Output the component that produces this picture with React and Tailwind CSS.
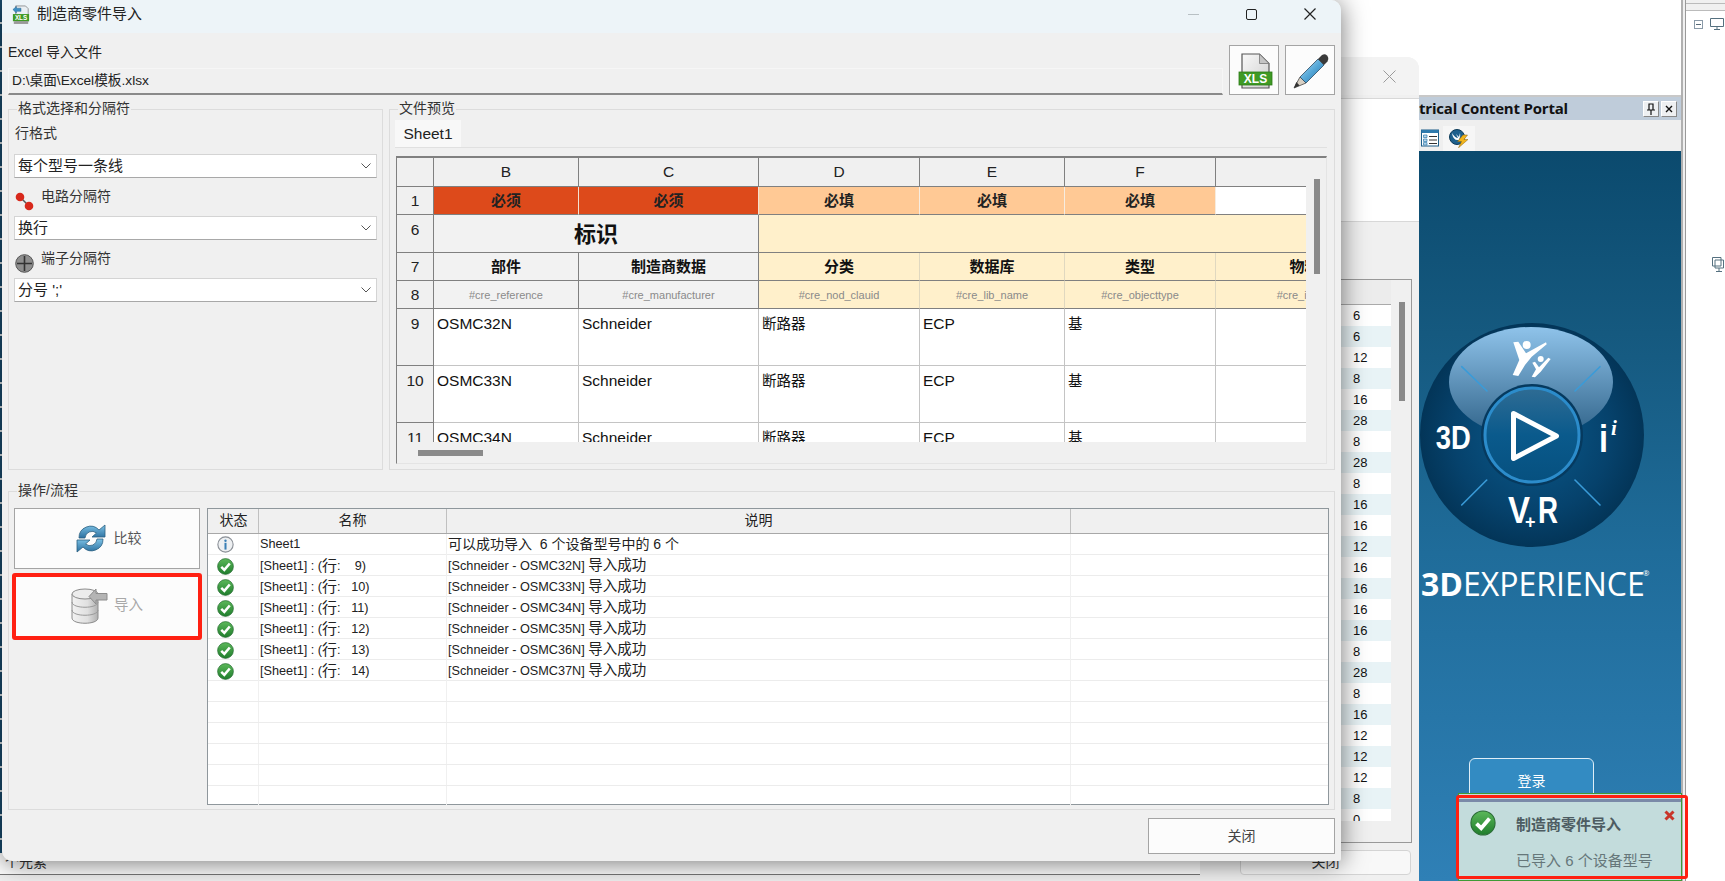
import React from "react";

const numbers = [6,6,12,8,16,28,8,28,8,16,16,12,16,16,16,16,8,28,8,16,12,12,12,8,0];
const listRows = [
  ["  9)", "[Schneider - OSMC32N]"],
  [" 10)", "[Schneider - OSMC33N]"],
  [" 11)", "[Schneider - OSMC34N]"],
  [" 12)", "[Schneider - OSMC35N]"],
  [" 13)", "[Schneider - OSMC36N]"],
  [" 14)", "[Schneider - OSMC37N]"],
];

function Check({ size = 17 }) {
  return (
    <svg width={size} height={size} viewBox="0 0 20 20" className="shrink-0">
      <defs>
        <linearGradient id="chk" x1="0" y1="0" x2="0" y2="1">
          <stop offset="0" stopColor="#5cb85a" />
          <stop offset="1" stopColor="#1f7d2c" />
        </linearGradient>
      </defs>
      <circle cx="10" cy="10" r="9.3" fill="url(#chk)" stroke="#2a6b35" strokeWidth="0.8" />
      <path d="M5 10.5 L8.6 14 L15 6.5" fill="none" stroke="#fff" strokeWidth="3" />
    </svg>
  );
}

function Info() {
  return (
    <svg width="17" height="17" viewBox="0 0 20 20" className="shrink-0">
      <circle cx="10" cy="10" r="9" fill="#eef0f2" stroke="#8a8f96" strokeWidth="1.3" />
      <circle cx="10" cy="5.6" r="1.4" fill="#3a7fb5" />
      <rect x="8.8" y="8" width="2.4" height="8" fill="#3a7fb5" />
    </svg>
  );
}

function Chevron() {
  return (
    <svg width="10" height="6" viewBox="0 0 10 6" className="shrink-0">
      <path d="M0.5 0.5 L5 5 L9.5 0.5" fill="none" stroke="#555" strokeWidth="1" />
    </svg>
  );
}

function Select({ children }) {
  return (
    <div className="flex h-[24px] items-center justify-between border border-[#d4d4d4] border-b-[#a8a8a8] bg-white pl-[3px] pr-[5px] text-[15px] text-[#222]">
      <span>{children}</span>
      <Chevron />
    </div>
  );
}

function Group({ label, className, children }) {
  return (
    <div className={"relative border border-[#dcdcdc] " + className}>
      <span className="absolute left-[8px] top-[-12px] bg-[#f0f0f0] px-px text-[14px] leading-[20px] text-[#333]">{label}</span>
      {children}
    </div>
  );
}

const hd = "flex items-center justify-center border-r border-b border-r-[#808080] border-b-[#808080] bg-[#f0f0f0] text-[#222]";
const rowNum = "flex justify-center pt-[4px] border-r border-b border-r-[#808080] border-b-[#808080] bg-[#f0f0f0] text-[#222]";
const req = "flex items-center justify-center border-r border-b border-r-[#f4e0d0] border-b-[#808080] bg-[#dd4a1b] text-[15px] font-bold text-[#222]";
const fill = "flex items-center justify-center border-r border-b border-r-[#f6ece0] border-b-[#808080] bg-[#ffc995] text-[15px] font-bold text-[#222]";
const grayHead = "flex items-center justify-center border-r border-b border-r-[#808080] border-b-[#808080] bg-[#f2f2f2] text-[15px] font-bold text-[#111] whitespace-nowrap";
const yelHead = "flex items-center justify-center border-r border-b border-r-[#e0d8c0] border-b-[#808080] bg-[#fff0cb] text-[15px] font-bold text-[#111] whitespace-nowrap";
const grayKey = "flex items-center justify-center border-r border-b border-r-[#808080] border-b-[#808080] bg-[#f2f2f2] text-[11px] text-[#8a8a8a] whitespace-nowrap";
const yelKey = "flex items-center justify-center border-r border-b border-r-[#e0d8c0] border-b-[#808080] bg-[#fff0cb] text-[11px] text-[#8a8a8a] whitespace-nowrap";
const cell = "pl-[3px] pt-[4px] border-r border-b border-[#c4c4c4] bg-white text-[#111] whitespace-nowrap";

function DataRow({ n, part }) {
  return (
    <>
      <div className={rowNum}>{n}</div>
      <div className={cell}>{part}</div>
      <div className={cell}>Schneider</div>
      <div className={cell + " text-[14.5px]"}>断路器</div>
      <div className={cell}>ECP</div>
      <div className={cell + " text-[14.5px]"}>基</div>
      <div className={cell}></div>
    </>
  );
}

function Sheet() {
  return (
    <div className="ml-px mt-[8px] flex h-[308px] w-[931px] border-l border-t-2 border-r border-b border-l-[#808080] border-t-[#808080] border-r-[#e4e4e4] border-b-[#e4e4e4]">
      <div className="flex w-[909px] flex-col">
        <div className="h-[285px] overflow-hidden">
          <div className="grid w-[1027px] grid-cols-[37px_145px_180px_161px_145px_151px_208px] grid-rows-[29px_28px_38px_28px_28px_57px_57px_57px] text-[15.5px] leading-[22px]">
            <div className={hd}></div>
            <div className={hd}>B</div>
            <div className={hd}>C</div>
            <div className={hd}>D</div>
            <div className={hd}>E</div>
            <div className={hd}>F</div>
            <div className={hd}></div>

            <div className={hd}>1</div>
            <div className={req}>必须</div>
            <div className={req}>必须</div>
            <div className={fill}>必填</div>
            <div className={fill}>必填</div>
            <div className={fill}>必填</div>
            <div className="border-b border-b-[#808080] bg-white"></div>

            <div className={rowNum}>6</div>
            <div className="col-span-2 flex items-center justify-center border-r border-b border-r-[#808080] border-b-[#808080] bg-[#f2f2f2] pt-[3px] text-[22px] font-bold text-[#111]">标识</div>
            <div className="col-span-4 border-b border-b-[#808080] bg-[#fff0cb]"></div>

            <div className={hd}>7</div>
            <div className={grayHead}>部件</div>
            <div className={grayHead}>制造商数据</div>
            <div className={yelHead}>分类</div>
            <div className={yelHead}>数据库</div>
            <div className={yelHead}>类型</div>
            <div className={yelHead}>物料编号</div>

            <div className={hd}>8</div>
            <div className={grayKey}>#cre_reference</div>
            <div className={grayKey}>#cre_manufacturer</div>
            <div className={yelKey}>#cre_nod_clauid</div>
            <div className={yelKey}>#cre_lib_name</div>
            <div className={yelKey}>#cre_objecttype</div>
            <div className={yelKey}>#cre_itemnumber</div>

            <DataRow n="9" part="OSMC32N" />
            <DataRow n="10" part="OSMC33N" />
            <DataRow n="11" part="OSMC34N" />
          </div>
        </div>
        <div className="h-[21px] pl-[21px] pt-[8px]">
          <div className="h-[6px] w-[65px] bg-[#8a8a8a]"></div>
        </div>
      </div>
      <div className="w-[20px] pl-[8px] pt-[21px]">
        <div className="h-[95px] w-[6px] bg-[#8a8a8a]"></div>
      </div>
    </div>
  );
}

function XlsIcon() {
  return (
    <svg width="50" height="50" viewBox="0 0 50 50">
      <defs>
        <linearGradient id="doc" x1="0" y1="0" x2="1" y2="1">
          <stop offset="0" stopColor="#f8f8f8" />
          <stop offset="1" stopColor="#cfcfcf" />
        </linearGradient>
      </defs>
      <path d="M12 8 H29.5 L39 17.5 V42 H12 Z" fill="url(#doc)" stroke="#555" strokeWidth="1.2" />
      <path d="M29.5 8 V17.5 H39 Z" fill="#c4c4c4" stroke="#777" strokeWidth="0.8" />
      <rect x="9" y="26" width="33" height="13" fill="#3f9a25" stroke="#2d7a18" strokeWidth="0.8" />
      <text x="25.5" y="37" textAnchor="middle" fontSize="12" fontWeight="700" fill="#fff" fontFamily="Liberation Sans">XLS</text>
    </svg>
  );
}

function PencilIcon() {
  return (
    <svg width="50" height="50" viewBox="0 0 50 50">
      <defs>
        <linearGradient id="pen" x1="0" y1="0" x2="1" y2="1">
          <stop offset="0" stopColor="#bfe2f5" />
          <stop offset="0.5" stopColor="#56a8d8" />
          <stop offset="1" stopColor="#1f6da6" />
        </linearGradient>
      </defs>
      <path d="M14 31 L20 37 L8 42 Z" fill="#d8d0c4" stroke="#444" strokeWidth="0.8" />
      <path d="M8 42 L10.3 36 L13.6 39.4 Z" fill="#333" />
      <path d="M14 31 L32 13 L38 19 L20 37 Z" fill="url(#pen)" stroke="#2d4d63" strokeWidth="0.8" />
      <path d="M32 13 L36 9 Q39 7.5 41 9.5 L42 11 Q43 13.5 41.5 15.5 L38 19 Z" fill="#3a3a3a" />
    </svg>
  );
}

function RefreshIcon() {
  return (
    <svg width="30" height="31" viewBox="0 0 30 31" className="shrink-0">
      <defs>
        <linearGradient id="rf" x1="0" y1="0" x2="0" y2="1">
          <stop offset="0" stopColor="#7cc2e6" />
          <stop offset="1" stopColor="#2b6f9f" />
        </linearGradient>
      </defs>
      <path d="M3 15 A11.5 11.5 0 0 1 23 7 L29 2 V14 H16 L20.5 10 A7 7 0 0 0 9 15 Z" fill="url(#rf)" stroke="#2b5f80" strokeWidth="0.8" />
      <path d="M27 16 A11.5 11.5 0 0 1 7 24 L1 29 V17 H14 L9.5 21 A7 7 0 0 0 21 16 Z" fill="url(#rf)" stroke="#2b5f80" strokeWidth="0.8" />
    </svg>
  );
}

function DbIcon() {
  return (
    <svg width="37" height="36" viewBox="0 0 37 36" className="shrink-0">
      <defs>
        <linearGradient id="db" x1="0" y1="0" x2="1" y2="0">
          <stop offset="0" stopColor="#f2f2f2" />
          <stop offset="0.6" stopColor="#e0e0e0" />
          <stop offset="1" stopColor="#b0b0b0" />
        </linearGradient>
      </defs>
      <path d="M1 6 V30 C1 37 27 37 27 30 V6 Z" fill="url(#db)" stroke="#8c8c8c" />
      <ellipse cx="14" cy="6" rx="13" ry="5" fill="#ececec" stroke="#8c8c8c" />
      <path d="M1 14 C1 21 27 21 27 14" fill="none" stroke="#9a9a9a" />
      <path d="M1 22 C1 29 27 29 27 22" fill="none" stroke="#9a9a9a" />
      <path d="M18 8.5 L25 1 V5.5 H36 V12 H25 V16 Z" fill="#b4b4b4" stroke="#8c8c8c" />
    </svg>
  );
}

function TitleIcon() {
  return (
    <svg width="18" height="19" viewBox="0 0 20 21" className="shrink-0">
      <path d="M4 1 H15 L18 4 V18 H4 Z" fill="#e8eef2" stroke="#777" strokeWidth="0.8" />
      <path d="M1 5 L5 1.5 V3.5 H10 V7 H5 V9 Z" fill="#3c8fc4" stroke="#24608a" strokeWidth="0.5" />
      <rect x="1" y="10" width="18" height="8" fill="#3f9a25" />
      <rect x="2" y="18" width="16" height="3" fill="#9a9a9a" />
      <text x="10" y="16.5" textAnchor="middle" fontSize="7" fontWeight="700" fill="#fff" fontFamily="Liberation Sans">XLS</text>
    </svg>
  );
}

function Logo() {
  return (
    <svg width="226" height="226" viewBox="0 0 226 226" className="block">
      <defs>
        <radialGradient id="disc" cx="0.5" cy="0.5" r="0.5">
          <stop offset="0" stopColor="#0a5a8c" />
          <stop offset="0.7" stopColor="#06426c" />
          <stop offset="1" stopColor="#033558" />
        </radialGradient>
        <linearGradient id="ell" x1="0" y1="0" x2="0" y2="1">
          <stop offset="0" stopColor="#8fc3ea" />
          <stop offset="1" stopColor="#2f6288" />
        </linearGradient>
        <linearGradient id="core" x1="0" y1="0" x2="0" y2="1">
          <stop offset="0" stopColor="#2f6c94" />
          <stop offset="0.5" stopColor="#0a5a8c" />
          <stop offset="1" stopColor="#06507f" />
        </linearGradient>
      </defs>
      <circle cx="113" cy="113" r="112" fill="url(#disc)" />
      <ellipse cx="112" cy="60" rx="82" ry="55" fill="url(#ell)" />
      <circle cx="113" cy="113" r="51" fill="#063a5f" />
      <circle cx="113" cy="113" r="47" fill="url(#core)" stroke="#2c8ccb" strokeWidth="3" />
      <path d="M94.5 91.5 L137.5 114 L94.5 136.5 Z" fill="none" stroke="#fff" strokeWidth="5" strokeLinejoin="round" />
      <g stroke="#3a9bd8" strokeWidth="1.6" strokeLinecap="round">
        <path d="M42.7 44.7 L68 69" />
        <path d="M181 44.7 L156 69" />
        <path d="M67.7 158 L42.7 183" />
        <path d="M156 158 L181 183" />
      </g>
      <g fill="#fff" fontFamily="Liberation Sans" fontWeight="700">
        <text x="16.7" y="127.3" fontSize="33" textLength="35" lengthAdjust="spacingAndGlyphs">3D</text>
        <text x="180" y="130" fontSize="38" textLength="9" lengthAdjust="spacingAndGlyphs">i</text>
        <text x="192" y="113" fontSize="21" fontStyle="italic" fontFamily="Liberation Serif">i</text>
        <text x="89" y="201" fontSize="36" textLength="22" lengthAdjust="spacingAndGlyphs">V</text>
        <text x="119" y="201" fontSize="36" textLength="20" lengthAdjust="spacingAndGlyphs">R</text>
        <text x="106" y="206" fontSize="18">+</text>
      </g>
      <path d="M94.3 20.3 L99.3 19.7 L107 31.3 L127 20.3 L127.7 22.3 L112.7 34.7 L106 43 L99.3 54 L93.7 53 L100.3 38 Z" fill="#fff" />
      <path d="M113.3 40.7 L116 39.7 L120 45.3 L129.3 35.7 L131.7 37 L121.7 49.7 L116 55.3 L112.7 54.7 L117 47.3 Z" fill="#fff" />
      <circle cx="107.7" cy="23" r="4" fill="#fff" />
      <circle cx="121.7" cy="37" r="3" fill="#fff" />
    </svg>
  );
}

function BackWindow() {
  return (
    <div className="absolute left-[1200px] top-[57px] flex h-[824px] w-[219px] flex-col rounded-tr-[12px] bg-[#f0f0f0]">
      <div className="flex h-[38px] items-center justify-end rounded-tr-[12px] bg-[#f3f3f3] pr-[23px]">
        <svg width="13" height="13" viewBox="0 0 13 13">
          <path d="M0.5 0.5 L12.5 12.5 M12.5 0.5 L0.5 12.5" stroke="#9a9a9a" strokeWidth="1" />
        </svg>
      </div>
      <div className="mt-[3px] h-[124px] border-y border-[#d8d8d8] bg-white"></div>
      <div className="flex flex-1 flex-col pt-[57px]">
        <div className="flex h-[564px] w-[212px] border border-[#999] bg-[#f0f0f0]">
          <div className="w-[190px]">
            <div className="h-[25px] border-b border-[#aaa] bg-[#ececec]"></div>
            <div className="h-[516px] overflow-hidden text-[13px]">
              {numbers.map((n, i) => (
                <div key={i} className="h-[21px] pl-[152px] leading-[21px] text-[#111] odd:bg-white even:bg-[#e8f3f6]">{n}</div>
              ))}
            </div>
          </div>
          <div className="pl-[8px] pt-[22px]">
            <div className="h-[99px] w-[6px] bg-[#8a8a8a]"></div>
          </div>
        </div>
        <div className="ml-[40px] mt-[7px] flex h-[25px] w-[171px] items-center justify-center rounded-[4px] border border-[#d4d4d4] bg-[#f8f8f8] text-[14px] text-[#333]">关闭</div>
      </div>
    </div>
  );
}

function Portal() {
  return (
    <div className="absolute left-[1419px] top-0 flex h-[881px] w-[262px] flex-col">
      <div className="h-[97px] border-b-2 border-[#c8c8c8] bg-white"></div>
      <div className="flex h-[23px] items-center justify-between bg-[#bfccda] pr-[4px]">
        <span className="overflow-hidden whitespace-nowrap text-[15px] font-bold leading-[23px] tracking-[-0.2px] text-[#111] [font-family:'Open_Sans',sans-serif]">trical Content Portal</span>
        <div className="flex gap-[2px]">
          <div className="flex h-[16px] w-[16px] items-center justify-center border border-[#888] border-l-white border-t-white bg-[#eef0f2]">
            <svg width="10" height="12" viewBox="0 0 10 12"><path d="M3 1 H7 V7 H3 Z M1 7 H9 M5 7 V12" fill="none" stroke="#111" strokeWidth="1.2" /></svg>
          </div>
          <div className="flex h-[16px] w-[16px] items-center justify-center border border-[#888] border-l-white border-t-white bg-[#eef0f2]">
            <svg width="8" height="8" viewBox="0 0 8 8"><path d="M1 1 L7 7 M7 1 L1 7" stroke="#111" strokeWidth="1.4" /></svg>
          </div>
        </div>
      </div>
      <div className="flex h-[31px] items-center bg-[#efefef] pl-[2px] pt-[5px]">
        <svg width="18" height="18" viewBox="0 0 18 18">
          <rect x="0.5" y="1" width="17" height="16" fill="#fff" stroke="#1e5f8a" />
          <rect x="0.5" y="1" width="17" height="3" fill="#2e7aad" />
          <path d="M2.5 6 H6 V8.5 H2.5 Z M2.5 10 H6 V12.5 H2.5 Z M2.5 13.6 H6 V16 H2.5 Z" fill="#bcd8ea" stroke="#2e7aad" strokeWidth="0.7" />
          <path d="M8 7.5 H16 M8 11 H16 M8 14.5 H16" stroke="#333" strokeWidth="1" />
        </svg>
        <div className="ml-[4px] flex h-[25px] w-[32px] items-center justify-center bg-[#f6f6f6]">
          <svg width="20" height="19" viewBox="0 0 20 19">
            <circle cx="8" cy="8" r="7.5" fill="#1d5f8c" stroke="#0c3a58" />
            <path d="M3 4 Q6 9 9 9 L7 5 L10 8 L11 4 Q12 7 10 11 Q4 12 3 4 Z" fill="#fff" />
            <path d="M14 6 L8.5 12.5 H12.5 L9.5 18.8 L19 10.5 H15 L18.5 6 Z" fill="#f2b41b" stroke="#8a6410" strokeWidth="0.5" />
          </svg>
        </div>
      </div>
      <div className="flex-1 bg-[linear-gradient(180deg,#0b4a6e_0%,#15597f_25%,#1f6c9a_55%,#2f80b6_100%)]">
        <div className="mt-[171px]"><Logo /></div>
        <div className="ml-[2px] mt-[20px] whitespace-nowrap text-[32px] leading-[32px] text-white [font-family:'Open_Sans',sans-serif]">
          <span className="font-bold">3D</span>EXPERIENCE<sup className="ml-[-2px] align-[16px] text-[8px] leading-none">®</sup>
        </div>
        <div className="ml-[50px] mt-[158px] flex h-[46px] w-[125px] items-center justify-center rounded-[6px] border border-[#dfeef7] bg-[#338bc2] text-[14px] text-white">登录</div>
      </div>
    </div>
  );
}

function RightPane() {
  return (
    <div className="absolute left-[1681px] top-0 h-[881px] w-[44px] border-l-2 border-[#b0b0b0] bg-[#f0f0f0] pl-[2px]">
      <div className="h-full border-l border-[#999] bg-white">
        <div className="h-[3px] bg-[#f0f0f0]"></div>
        <div className="h-[8px] border-y border-[#bbb] bg-[#f0f0f0]"></div>
        <div className="flex items-center gap-[7px] pl-[8px] pt-[7px]">
          <div className="flex h-[9px] w-[9px] items-center justify-center border border-[#8a9aa8]"><div className="h-px w-[5px] bg-[#566a78]"></div></div>
          <svg width="14" height="12" viewBox="0 0 14 12"><path d="M0.5 0.5 H13.5 V8.5 H0.5 Z M7 8.5 V11 M4 11.5 H10" fill="none" stroke="#55707f" /></svg>
        </div>
        <div className="pl-[26px] pt-[227px]">
          <svg width="12" height="15" viewBox="0 0 12 15"><path d="M0.5 0.5 H9 V9 H0.5 Z M3 3 H11.5 V11 H3 Z M7 11 V14 M4 14.5 H10" fill="#fff" stroke="#55707f" /></svg>
        </div>
      </div>
    </div>
  );
}

function Dialog() {
  return (
    <div className="absolute left-[2px] top-0 flex h-[861px] w-[1339px] flex-col rounded-tr-[10px] rounded-bl-[10px] rounded-br-[2px] bg-[#f0f0f0] shadow-[0_2px_26px_rgba(0,0,0,0.55)]">
      <div className="flex h-[33px] items-center rounded-tr-[10px] bg-[#edf4f8] pb-[5px] pl-[10px]">
        <TitleIcon />
        <span className="ml-[7px] text-[15px] text-[#222]">制造商零件导入</span>
        <div className="ml-auto flex items-center pr-[25px]">
          <div className="mr-[47px] h-px w-[11px] bg-[#b8c0c4]"></div>
          <div className="mr-[47px] h-[11px] w-[11px] rounded-[2px] border-[1.5px] border-[#222]"></div>
          <svg width="12" height="12" viewBox="0 0 12 12"><path d="M0.5 0.5 L11.5 11.5 M11.5 0.5 L0.5 11.5" stroke="#222" strokeWidth="1.2" /></svg>
        </div>
      </div>

      <div className="flex items-end gap-[6px] px-[6px] pt-[12px]">
        <div className="flex-1">
          <div className="h-[23px] text-[14px] leading-[14px] text-[#222]">Excel 导入文件</div>
          <div className="flex h-[27px] items-center border border-[#f6f6f6] border-b-2 border-b-[#8a8a8a] pl-[3px] text-[13.7px] text-[#222]">D:\桌面\Excel模板.xlsx</div>
        </div>
        <div className="h-[50px] w-[50px] border border-[#a4a4a4] bg-[#fcfcfc]"><XlsIcon /></div>
        <div className="h-[50px] w-[50px] border border-[#a4a4a4] bg-[#fcfcfc]"><PencilIcon /></div>
      </div>

      <div className="mt-[14px] flex gap-[6px] px-[6px]">
        <Group label="格式选择和分隔符" className="h-[361px] w-[375px]">
          <div className="flex flex-col px-[5px] pt-[12px] text-[14px] text-[#333]">
            <div className="h-[32px] pl-px leading-[22px]">行格式</div>
            <Select>每个型号一条线</Select>
            <div className="flex h-[38px] items-start pl-px">
              <svg width="19" height="19" viewBox="0 0 19 19" className="mt-[14px]">
                <path d="M5 5 L14 14" stroke="#555" strokeWidth="1.5" />
                <circle cx="5" cy="5" r="4.3" fill="#d8291c" />
                <circle cx="14" cy="14" r="4.3" fill="#d8291c" />
              </svg>
              <span className="ml-[7px] mt-[7px] leading-[22px]">电路分隔符</span>
            </div>
            <Select>换行</Select>
            <div className="flex h-[38px] items-start pl-px">
              <svg width="19" height="19" viewBox="0 0 19 19" className="mt-[14px]">
                <circle cx="9.5" cy="9.5" r="8.8" fill="#8e8e8e" stroke="#555" />
                <path d="M9.5 2 V17 M2 9.5 H17" stroke="#333" strokeWidth="1.6" />
              </svg>
              <span className="ml-[7px] mt-[7px] leading-[22px]">端子分隔符</span>
            </div>
            <Select>分号 ';'</Select>
          </div>
        </Group>
        <Group label="文件预览" className="h-[361px] w-[946px]">
          <div className="px-[5px] pt-[10px]">
            <div className="w-[932px] border-b border-[#e0e0e0]">
              <div className="flex h-[27px] w-[66px] items-center justify-center bg-[#f8f8f8] text-[15.5px] text-[#222]">Sheet1</div>
            </div>
            <Sheet />
          </div>
        </Group>
      </div>

      <div className="mt-[21px] px-[6px]">
        <Group label="操作/流程" className="flex h-[319px] w-[1327px] gap-[7px] pl-[5px] pt-[16px]">
          <div className="flex w-[186px] flex-col gap-[6px]">
            <div className="flex h-[61px] items-center justify-center gap-[8px] border border-[#a4a4a4] bg-[#fcfcfc] pl-[3px] text-[14px] text-[#555]">
              <RefreshIcon />
              <span>比较</span>
            </div>
            <div className="relative flex h-[61px] items-center justify-center gap-[6px] bg-[#fcfcfc] text-[14.5px] text-[#a8a8a8]">
              <DbIcon />
              <span>导入</span>
              <div className="absolute -inset-x-[2px] -top-[2px] -bottom-[4px] rounded-[3px] border-[4px] border-[#ff2012]"></div>
            </div>
          </div>
          <div className="h-[297px] w-[1122px] border border-[#8f979c] bg-white text-[12.7px] text-[#222]">
            <div className="grid h-[25px] grid-cols-[50px_188px_624px_1fr] border-b border-[#a8a8a8] bg-[#f0f0f0] pl-px text-center text-[14px] leading-[23px]">
              <div className="border-r border-[#c0c0c0]">状态</div>
              <div className="border-r border-[#c0c0c0]">名称</div>
              <div className="border-r border-[#c0c0c0]">说明</div>
              <div></div>
            </div>
            <div className="grid h-[21px] grid-cols-[51px_188px_624px_1fr] border-b border-[#ececec]">
              <div className="flex items-center border-r border-[#f0f0f0] pl-[9px]"><Info /></div>
              <div className="flex items-center border-r border-[#f0f0f0] pl-px">Sheet1</div>
              <div className="flex items-center whitespace-pre border-r border-[#f0f0f0] pl-px text-[14px]">可以成功导入  6 个设备型号中的 6 个</div>
              <div></div>
            </div>
            {listRows.map((r) => (
              <div key={r[1]} className="grid h-[21px] grid-cols-[51px_188px_624px_1fr] border-b border-[#ececec]">
                <div className="flex items-center border-r border-[#f0f0f0] pl-[9px]"><Check /></div>
                <div className="flex items-center whitespace-pre border-r border-[#f0f0f0] pl-px">[Sheet1] : (<span className="text-[15px]">行</span>:  {r[0]}</div>
                <div className="flex items-center whitespace-pre border-r border-[#f0f0f0] pl-px">{r[1]} <span className="text-[14.5px]">导入成功</span></div>
                <div></div>
              </div>
            ))}
            {[0, 1, 2, 3, 4, 5].map((i) => (
              <div key={i} className="grid h-[21px] grid-cols-[51px_188px_624px_1fr] border-b border-[#ececec] last:border-b-0">
                <div className="border-r border-[#f0f0f0]"></div>
                <div className="border-r border-[#f0f0f0]"></div>
                <div className="border-r border-[#f0f0f0]"></div>
                <div></div>
              </div>
            ))}
          </div>
        </Group>
      </div>

      <div className="mt-[8px] flex justify-end pr-[6px]">
        <div className="flex h-[36px] w-[187px] items-center justify-center border border-[#a4a4a4] bg-[#fcfcfc] text-[14px] text-[#444]">关闭</div>
      </div>
    </div>
  );
}

function Toast() {
  return (
    <div className="absolute left-[1458px] top-[793px] h-[88px] w-[224px] border border-[#3f9a35] bg-[#c3dcdc]">
      <div className="mt-[5px] h-[3px] bg-[#7a8aa8]"></div>
      <div className="flex pl-[11px] pt-[8px]">
        <Check size={26} />
        <div className="ml-[20px] pt-[5px]">
          <div className="text-[15px] font-bold leading-[20px] text-[#4d5c62]">制造商零件导入</div>
          <div className="mt-[16px] whitespace-pre text-[15px] leading-[20px] text-[#66777a]">已导入 6 个设备型号</div>
        </div>
      </div>
      <svg width="11" height="11" viewBox="0 0 11 11" className="absolute right-[6px] top-[16px]">
        <path d="M1.5 1.5 L9.5 9.5 M9.5 1.5 L1.5 9.5" stroke="#c8352a" strokeWidth="3" />
      </svg>
      <div className="absolute -left-[3px] top-[1px] h-[84px] w-[232px] rounded-[3px] border-[3px] border-[#ff2012]"></div>
    </div>
  );
}

function BackStatus() {
  return (
    <div className="absolute left-0 top-0 h-[881px] w-[1240px] bg-white">
      <div className="h-[853px] w-[2px] bg-[repeating-linear-gradient(180deg,#1a4d70_0px,#1a4d70_22px,#dfe6ea_22px,#dfe6ea_24px)]"></div>
      <div className="h-[21px] pl-[5px] text-[14px] leading-[18px] text-[#333]">个元素</div>
      <div className="h-[7px] border-t border-[#777] bg-[#f0f0f0]"></div>
    </div>
  );
}

export default function App() {
  return (
    <div className="relative h-[881px] w-[1725px] overflow-hidden bg-white text-[14px] [font-family:'Liberation_Sans','Noto_Sans_CJK_SC',sans-serif]">
      <BackStatus />
      <Portal />
      <RightPane />
      <BackWindow />
      <Dialog />
      <Toast />
    </div>
  );
}
